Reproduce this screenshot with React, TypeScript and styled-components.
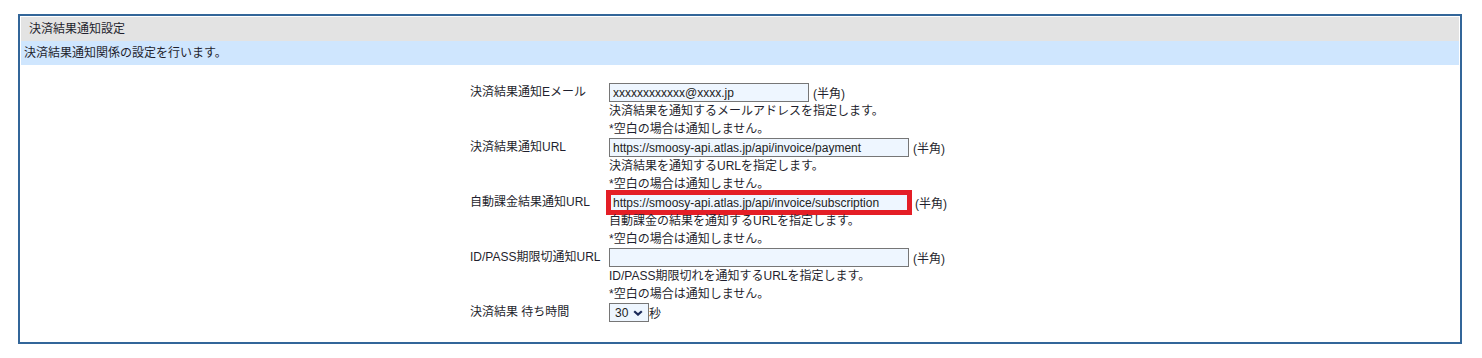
import styled, { createGlobalStyle } from "styled-components";
import { Fragment } from "react";

const GlobalStyle = createGlobalStyle`
  html, body {
    margin: 0;
    padding: 0;
    background: #ffffff;
  }
  body {
    font-family: "Liberation Sans", "Noto Sans CJK JP", sans-serif;
    font-size: 12px;
    color: #1f1f2e;
  }
`;

const Panel = styled.section`
  margin: 14px 0 0 18px;
  width: 1438px;
  border: 2px solid #336699;
  padding: 1px;
`;

const PanelHeader = styled.div`
  height: 24px;
  line-height: 24px;
  background: #e3e3e3;
  padding-left: 8px;
`;

const Description = styled.div`
  height: 24px;
  line-height: 24px;
  background: #cfe6fe;
  padding-left: 3px;
`;

const FormArea = styled.div`
  display: flex;
  justify-content: center;
  padding: 18px 0 19px;
`;

const FormTable = styled.div`
  display: grid;
  grid-template-columns: 139px 401px;
`;

const Label = styled.div`
  line-height: 19px;
  white-space: nowrap;
`;

const Field = styled.div`
  display: flex;
  flex-direction: column;
`;

const InputRow = styled.div`
  display: flex;
  align-items: center;
  height: 19px;
`;

const TextInput = styled.input<{ $w: number; $marked?: boolean }>`
  box-sizing: border-box;
  width: ${(p) => p.$w}px;
  height: 19px;
  margin: 0;
  padding: 0 ${(p) => (p.$marked ? "2px" : "3px")};
  border: ${(p) => (p.$marked ? "2px solid #e41e26" : "1px solid #767676")};
  box-shadow: ${(p) => (p.$marked ? "0 0 0 3px #e41e26" : "none")};
  background: #eef6ff;
  font-family: "Liberation Sans", sans-serif;
  font-size: 12px;
  color: #222;
  outline: none;
`;

const Note = styled.span<{ $wide?: boolean }>`
  margin-left: ${(p) => (p.$wide ? "6px" : "4px")};
  white-space: nowrap;
`;

const Help = styled.div`
  line-height: 18px;
  white-space: nowrap;
`;

const SelectBox = styled.span`
  position: relative;
  display: inline-flex;
  align-items: center;
`;

const Select = styled.select`
  appearance: none;
  box-sizing: border-box;
  width: 40px;
  height: 19px;
  margin: 0;
  padding: 0 0 0 5px;
  border: 1px solid #767676;
  background: #eef6ff;
  font-family: "Liberation Sans", sans-serif;
  font-size: 12px;
  color: #222;
`;

const Chevron = styled.svg`
  position: absolute;
  right: 6px;
  top: 7px;
  width: 10px;
  height: 6px;
  pointer-events: none;
`;

type Row = {
  label: string;
  value: string;
  width: number;
  help: string;
  marked?: boolean;
};

const rows: Row[] = [
  {
    label: "決済結果通知Eメール",
    value: "xxxxxxxxxxxx@xxxx.jp",
    width: 200,
    help: "決済結果を通知するメールアドレスを指定します。",
  },
  {
    label: "決済結果通知URL",
    value: "https://smoosy-api.atlas.jp/api/invoice/payment",
    width: 300,
    help: "決済結果を通知するURLを指定します。",
  },
  {
    label: "自動課金結果通知URL",
    value: "https://smoosy-api.atlas.jp/api/invoice/subscription",
    width: 300,
    help: "自動課金の結果を通知するURLを指定します。",
    marked: true,
  },
  {
    label: "ID/PASS期限切通知URL",
    value: "",
    width: 300,
    help: "ID/PASS期限切れを通知するURLを指定します。",
  },
];

export default function App(): JSX.Element {
  return (
    <>
      <GlobalStyle />
      <Panel>
        <PanelHeader>決済結果通知設定</PanelHeader>
        <Description>決済結果通知関係の設定を行います。</Description>
        <FormArea>
          <FormTable>
            {rows.map((row) => (
              <Fragment key={row.label}>
                <Label>{row.label}</Label>
                <Field>
                  <InputRow>
                    <TextInput
                      type="text"
                      defaultValue={row.value}
                      $w={row.width}
                      $marked={row.marked}
                    />
                    <Note $wide={row.marked}>(半角)</Note>
                  </InputRow>
                  <Help>{row.help}</Help>
                  <Help>*空白の場合は通知しません。</Help>
                </Field>
              </Fragment>
            ))}
            <Label>決済結果 待ち時間</Label>
            <Field>
              <InputRow>
                <SelectBox>
                  <Select defaultValue="30">
                    <option value="10">10</option>
                    <option value="20">20</option>
                    <option value="30">30</option>
                    <option value="60">60</option>
                  </Select>
                  <Chevron viewBox="0 0 10 6">
                    <path
                      d="M1.2 1.2 L5 4.6 L8.8 1.2"
                      fill="none"
                      stroke="#1b2a5a"
                      strokeWidth="2.2"
                    />
                  </Chevron>
                </SelectBox>
                秒
              </InputRow>
            </Field>
          </FormTable>
        </FormArea>
      </Panel>
    </>
  );
}
